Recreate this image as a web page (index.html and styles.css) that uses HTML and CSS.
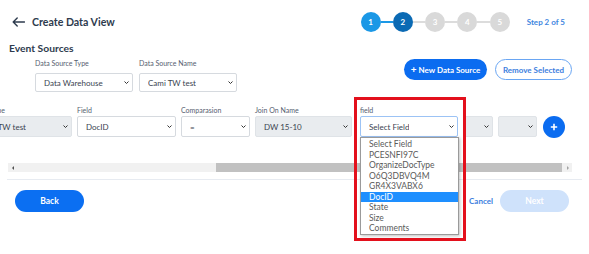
FILE: index.html
```html
<!DOCTYPE html>
<html>
<head>
<meta charset="utf-8">
<link rel="stylesheet" href="styles.css">
</head>
<body>
<div class="page">
  <header class="header">
    <svg class="back-arrow" width="13" height="10" viewBox="0 0 13 10"><path d="M12.5 5H1.2M5.2 1L1.2 5l4 4" fill="none" stroke="#2e3b4e" stroke-width="1.4" stroke-linecap="round" stroke-linejoin="round"/></svg>
    <h1 class="title">Create Data View</h1>
    <div class="stepper">
      <span class="step done">1</span><span class="bar done"></span>
      <span class="step current">2</span><span class="bar"></span>
      <span class="step">3</span><span class="bar"></span>
      <span class="step">4</span><span class="bar"></span>
      <span class="step">5</span>
      <span class="step-text">Step 2 of 5</span>
    </div>
  </header>

  <h2 class="section-title">Event Sources</h2>

  <div class="source-row">
    <div class="source-fields">
      <div class="field w98">
        <label class="lbl">Data Source Type</label>
        <div class="sel tall"><span>Data Warehouse</span><svg class="chev" width="5" height="3" viewBox="0 0 5 3"><path d="M.5.5l2 2 2-2" fill="none" stroke="#333" stroke-width="1"/></svg></div>
      </div>
      <div class="field w98">
        <label class="lbl">Data Source Name</label>
        <div class="sel tall"><span>Cami TW test</span><svg class="chev" width="5" height="3" viewBox="0 0 5 3"><path d="M.5.5l2 2 2-2" fill="none" stroke="#333" stroke-width="1"/></svg></div>
      </div>
    </div>
    <div class="source-actions">
      <button class="btn primary"><span class="plus">+</span> New Data Source</button>
      <button class="btn outline">Remove Selected</button>
    </div>
  </div>

  <div class="cond-row">
    <div class="clip">
      <div class="field w103">
        <label class="lbl">Table Name</label>
        <div class="sel gray"><span>Cami TW test</span><svg class="chev" width="5" height="3" viewBox="0 0 5 3"><path d="M.5.5l2 2 2-2" fill="none" stroke="#333" stroke-width="1"/></svg></div>
      </div>
    </div>
    <div class="field w99">
      <label class="lbl">Field</label>
      <div class="sel"><span>DocID</span><svg class="chev" width="5" height="3" viewBox="0 0 5 3"><path d="M.5.5l2 2 2-2" fill="none" stroke="#333" stroke-width="1"/></svg></div>
    </div>
    <div class="field w69">
      <label class="lbl">Comparasion</label>
      <div class="sel"><span>=</span><svg class="chev" width="5" height="3" viewBox="0 0 5 3"><path d="M.5.5l2 2 2-2" fill="none" stroke="#333" stroke-width="1"/></svg></div>
    </div>
    <div class="field w97">
      <label class="lbl">Join On Name</label>
      <div class="sel gray"><span>DW 15-10</span><svg class="chev" width="5" height="3" viewBox="0 0 5 3"><path d="M.5.5l2 2 2-2" fill="none" stroke="#333" stroke-width="1"/></svg></div>
    </div>
    <div class="field w98 focus-field">
      <label class="lbl">field</label>
      <div class="sel focus"><span>Select Field</span><svg class="chev" width="5" height="3" viewBox="0 0 5 3"><path d="M.5.5l2 2 2-2" fill="none" stroke="#333" stroke-width="1"/></svg></div>
      <ul class="dropdown">
        <li>Select Field</li>
        <li>PCESNFI97C</li>
        <li>OrganizeDocType</li>
        <li>O6Q3DBVQ4M</li>
        <li>GR4X3VABX6</li>
        <li class="active">DocID</li>
        <li>State</li>
        <li>Size</li>
        <li>Comments</li>
      </ul>
      <div class="highlight-box"></div>
    </div>
    <div class="field w29">
      <label class="lbl">&nbsp;</label>
      <div class="sel gray"><span></span><svg class="chev" width="5" height="3" viewBox="0 0 5 3"><path d="M.5.5l2 2 2-2" fill="none" stroke="#333" stroke-width="1"/></svg></div>
    </div>
    <div class="field w39">
      <label class="lbl">&nbsp;</label>
      <div class="sel gray"><span></span><svg class="chev" width="5" height="3" viewBox="0 0 5 3"><path d="M.5.5l2 2 2-2" fill="none" stroke="#333" stroke-width="1"/></svg></div>
    </div>
    <div class="add-col">
      <button class="add-btn"><svg width="8" height="8" viewBox="0 0 8 8"><path d="M4 .8v6.4M.8 4h6.4" stroke="#fff" stroke-width="1.6"/></svg></button>
    </div>
  </div>

  <div class="scrollbar">
    <span class="arrow left"></span>
    <div class="track"><div class="thumb"></div></div>
    <span class="arrow right"></span>
  </div>

  <div class="divider"></div>

  <footer class="footer">
    <button class="btn pill back">Back</button>
    <div class="footer-right">
      <a class="cancel">Cancel</a>
      <button class="btn pill next">Next</button>
    </div>
  </footer>
</div>
</body>
</html>
```

FILE: styles.css
```css
* { box-sizing: border-box; margin: 0; padding: 0; }
html, body { background: #fff; }
body {
  margin: 0;
  font-family: "Lato", "Open Sans", sans-serif;
  color: #2e3b4e;
  width: 589px;
  height: 254px;
  overflow: hidden;
}
.page { width: 589px; }

.header {
  display: flex;
  align-items: center;
  height: 42px;
  padding: 2px 24px 0 12px;
}
.back-arrow { display: block; }
.title {
  margin-left: 7px;
  font-size: 10.6px;
  font-weight: 700;
  color: #2e3b4e;
}
.stepper {
  margin-left: auto;
  display: flex;
  align-items: center;
}
.step {
  width: 20px;
  height: 20px;
  border-radius: 50%;
  background: #d9d9d9;
  color: #fff;
  font-size: 8px;
  font-weight: 700;
  display: flex;
  align-items: center;
  justify-content: center;
}
.step.done { background: #1b98e6; }
.step.current { background: #0b6ab4; }
.bar {
  width: 12.3px;
  height: 2px;
  background: #dcdcdc;
}
.bar.done { background: #1b98e6; }
.step-text {
  margin-left: 17px;
  font-size: 8px;
  font-weight: 700;
  color: #3e86e0;
}

.section-title {
  padding-left: 9px;
  font-size: 10.3px;
  font-weight: 700;
  line-height: 12px;
  color: #2e3b4e;
}

.source-row {
  display: flex;
  padding: 4px 17px 0 35px;
}
.source-fields { display: flex; gap: 6px; }
.source-actions {
  margin-left: auto;
  display: flex;
  gap: 8px;
  margin-top: 1px;
}

.field { display: flex; flex-direction: column; flex-shrink: 0; position: relative; }
.w103 { width: 103px; }
.w98 { width: 98px; }
.w99 { width: 99px; }
.w97 { width: 97px; }
.w69 { width: 69px; }
.w39 { width: 39px; }
.w29 { width: 29px; }

.lbl {
  font-size: 7px;
  line-height: 10px;
  height: 10px;
  color: #566070;
  white-space: nowrap;
  margin-bottom: 5px;
}
.cond-row .lbl { margin-bottom: 1px; }

.sel {
  height: 21px;
  border: 1px solid #d6dadf;
  border-radius: 2px;
  background: #fff;
  display: flex;
  align-items: center;
  justify-content: space-between;
  padding: 0 3px 0 8px;
  font-size: 8px;
  color: #3a4350;
  white-space: nowrap;
}
.sel.tall { height: 19px; }
.sel.gray { background: #e9ecef; border-color: #dfe3e7; }
.sel.focus { border-color: #9cc3f5; }
.sel span { overflow: hidden; }
.chev { flex-shrink: 0; display: block; }

.btn {
  font-family: inherit;
  height: 21px;
  border-radius: 11px;
  font-size: 8px;
  font-weight: 700;
  cursor: pointer;
}
.btn.primary {
  width: 83px;
  background: #0b6cf0;
  color: #fff;
  border: none;
}
.btn.primary .plus { font-size: 10px; line-height: 8px; }
.btn.outline {
  width: 77px;
  background: #fff;
  color: #3b7ede;
  border: 1px solid #6aa6f3;
}

.cond-row {
  display: flex;
  margin-top: 13px;
  gap: 5px;
}
.clip {
  width: 72px;
  overflow: hidden;
  display: flex;
  justify-content: flex-end;
  flex-shrink: 0;
}
.focus-field { margin-left: 3px; margin-right: 1px; }
.add-col { display: flex; flex-direction: column; padding-top: 11px; margin-left: 1px; }
.add-btn {
  width: 22px;
  height: 22px;
  border-radius: 50%;
  border: none;
  background: #0b6cf0;
  display: flex;
  align-items: center;
  justify-content: center;
}
.add-btn svg { display: block; }

.dropdown {
  position: absolute;
  top: 32px;
  left: 0;
  width: 99px;
  list-style: none;
  background: #fff;
  border: 1px solid #9a9a9a;
  box-shadow: 1px 1px 3px rgba(0,0,0,0.25);
  padding: 1px 0 0;
  z-index: 5;
}
.dropdown li {
  height: 10.5px;
  line-height: 10.5px;
  font-size: 8.5px;
  color: #5a5a5a;
  padding-left: 8px;
  white-space: nowrap;
}
.dropdown li.active { background: #1e8fff; color: #fff; }

.highlight-box {
  position: absolute;
  left: -6px;
  top: -8px;
  width: 112px;
  height: 144px;
  border: 3px solid #e3101c;
  z-index: 6;
  pointer-events: none;
}

.scrollbar {
  display: flex;
  align-items: center;
  height: 9px;
  margin: 25px 17px 0 8px;
  background: #f1f1f1;
}
.arrow {
  width: 9px;
  height: 9px;
  display: flex;
  align-items: center;
  justify-content: center;
  flex-shrink: 0;
}
.arrow::before {
  content: "";
  border-top: 2px solid transparent;
  border-bottom: 2px solid transparent;
}
.arrow.left::before { border-right: 2.5px solid #505050; }
.arrow.right::before { border-left: 2.5px solid #a3a3a3; }
.track {
  flex: 1;
  height: 9px;
  display: flex;
}
.thumb {
  margin-left: 199px;
  width: 346px;
  height: 9px;
  background: #c1c1c1;
}

.divider {
  height: 1px;
  background: #e7ebf1;
  margin: 7px 7px 0 7px;
}

.footer {
  display: flex;
  align-items: center;
  padding: 10px 20px 0 15px;
}
.btn.pill {
  width: 69px;
  height: 22px;
  border: none;
  font-size: 8.5px;
}
.btn.back { background: #0b6ff2; color: #fff; }
.footer-right {
  margin-left: auto;
  display: flex;
  align-items: center;
  gap: 7px;
}
.cancel {
  font-size: 8px;
  font-weight: 700;
  color: #3b7ede;
}
.btn.next { background: #cfe2fb; color: #fff; }
```
